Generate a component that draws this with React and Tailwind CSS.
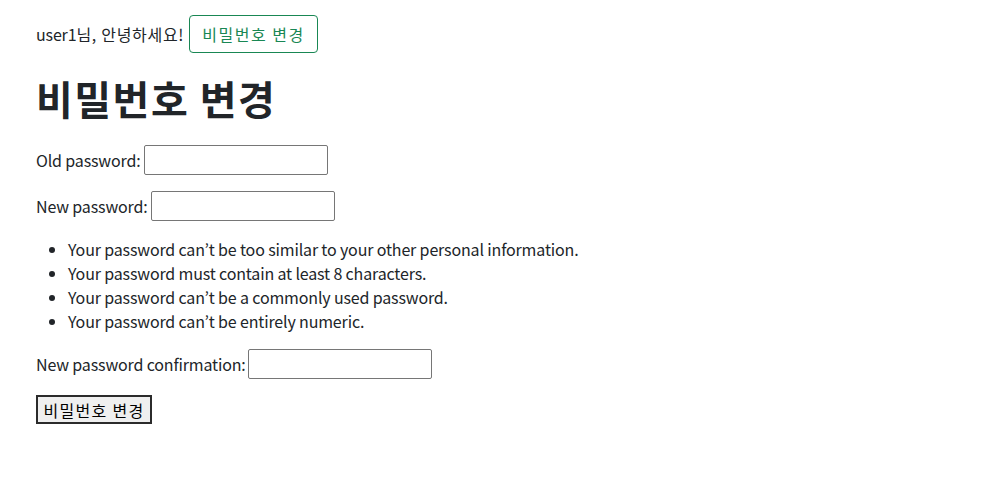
export default function App() {
  const font = { fontFamily: '"Noto Sans CJK KR", "Noto Sans", sans-serif' };
  return (
    <div className="min-h-screen bg-white text-[#212529] text-[16px] leading-6 px-[36px] pt-[15px] tracking-[-0.15px]" style={font}>
      <div className="flex items-center gap-[5px]">
        <span>user1<span className="tracking-[0.7px]">님, 안녕하세요!</span></span>
        <button className="h-[38px] px-3 border border-[#198754] text-[#198754] rounded-[4px] leading-6 bg-white tracking-[1.5px]">
          비밀번호 변경
        </button>
      </div>
      <h1 className="mt-[21px] mb-[2px] text-[40px] leading-[48px] font-bold tracking-[1.5px]">비밀번호 변경</h1>
      <form className="mt-[23px]">
        <div className="flex items-center h-[30px] mb-4">
          <label>Old password:</label>
          <input type="password" className="ml-[4px] w-[184px] h-[30px] border border-[#767676] rounded-[2px]" />
        </div>
        <div className="flex items-center h-[30px] mb-4">
          <label>New password:</label>
          <input type="password" className="ml-[3px] w-[184px] h-[30px] border border-[#767676] rounded-[2px]" />
        </div>
        <ul className="list-disc pl-8 mb-4">
          <li>Your password can’t be too similar to your other personal information.</li>
          <li>Your password must contain at least 8 characters.</li>
          <li>Your password can’t be a commonly used password.</li>
          <li>Your password can’t be entirely numeric.</li>
        </ul>
        <div className="flex items-center h-[30px] mb-4">
          <label>New password confirmation:</label>
          <input type="password" className="ml-[2px] w-[184px] h-[30px] border border-[#767676] rounded-[2px]" />
        </div>
        <button type="button" className="block h-[29px] w-[116px] border-2 border-[#2b2b2b] bg-[#efefef] text-black leading-5 tracking-[1.3px]">
          비밀번호 변경
        </button>
      </form>
    </div>
  );
}
